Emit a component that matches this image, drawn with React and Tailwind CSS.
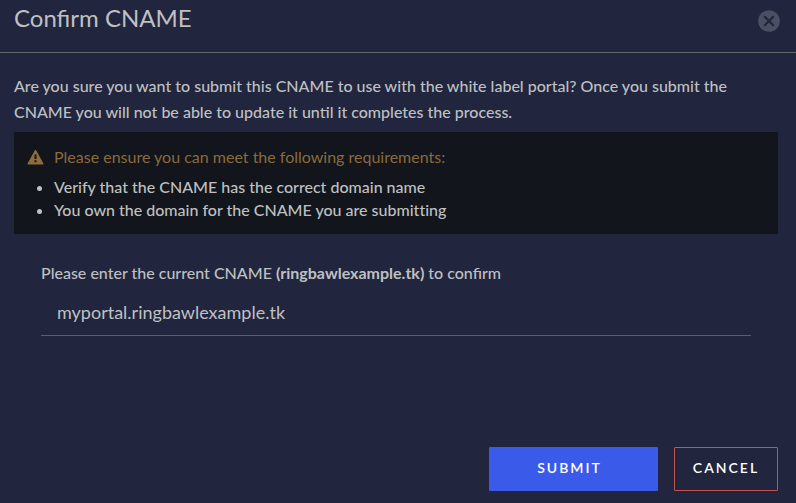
import React, { useState } from "react"

const requirements = [
  "Verify that the CNAME has the correct domain name",
  "You own the domain for the CNAME you are submitting",
]

const CloseIcon = () => (
  <svg width="22" height="22" viewBox="0 0 22 22" fill="none" aria-hidden="true">
    <circle cx="11" cy="11" r="10.8" fill="#4c4f63" />
    <path d="M6.8 6.8l8.4 8.4M15.2 6.8l-8.4 8.4" stroke="#21253e" strokeWidth="2.2" strokeLinecap="round" />
  </svg>
)

const WarningIcon = () => (
  <svg width="17" height="16" viewBox="0 0 17 16" fill="none" aria-hidden="true">
    <path
      d="M8.5 1L16.2 15H0.8z"
      fill="#8f6c3a"
      stroke="#8f6c3a"
      strokeWidth="1"
      strokeLinejoin="round"
    />
    <path d="M7.5 5.5h2v4.5h-2zM7.5 11.2h2v2h-2z" fill="#12151b" />
  </svg>
)

const App = () => {
  const [cname, setCname] = useState("myportal.ringbawlexample.tk")

  return (
    <div
      role="dialog"
      aria-labelledby="dialog-title"
      className="flex flex-col min-h-screen bg-[#21253e] text-[#bfc0c2] font-['Lato','Liberation_Sans',sans-serif]"
    >
      <header className="flex items-start justify-between h-[53px] pl-3.5 pr-4 border-b border-[#62646c]">
        <h1 id="dialog-title" className="pt-0.5 text-2xl leading-8">
          Confirm CNAME
        </h1>
        <button type="button" aria-label="Close" className="mt-2.5">
          <CloseIcon />
        </button>
      </header>

      <main className="flex-1 px-3.5 pt-5 mr-1">
        <p className="text-base leading-[26px] font-medium">
          Are you sure you want to submit this CNAME to use with the white label portal? Once you submit the CNAME you
          will not be able to update it until it completes the process.
        </p>

        <section className="mt-[7px] px-[13px] pt-[11px] pb-[13px] bg-[#12151b]">
          <h2 className="flex items-center gap-2.5 text-base leading-7 text-[#8a6a3b]">
            <WarningIcon />
            Please ensure you can meet the following requirements:
          </h2>
          <ul className="pt-1 pl-[27px] list-disc text-base leading-[23px] font-medium [font-variant-ligatures:none]">
            {requirements.map((item) => (
              <li key={item}>{item}</li>
            ))}
          </ul>
        </section>

        <div className="mt-[23px] mx-[27px]">
          <label htmlFor="cname" className="block text-base leading-8 font-medium">
            Please enter the current CNAME <b>(ringbawlexample.tk)</b> to confirm
          </label>
          <input
            id="cname"
            type="text"
            value={cname}
            onChange={(e) => setCname(e.target.value)}
            className="w-full h-[47px] px-4 text-lg border-b border-[#b03c42] outline-none"
          />
        </div>
      </main>

      <footer className="flex justify-end gap-4 pr-[18px] pb-3 text-sm font-semibold text-white">
        <button type="submit" className="w-[169px] h-11 pr-2 pb-0.5 rounded-[1px] bg-[#3a5be9] tracking-[2px]">
          SUBMIT
        </button>
        <button type="button" className="w-[104px] h-11 pb-0.5 rounded-[1px] border border-[#c25450] tracking-[2px]">
          CANCEL
        </button>
      </footer>
    </div>
  )
}

export default App
